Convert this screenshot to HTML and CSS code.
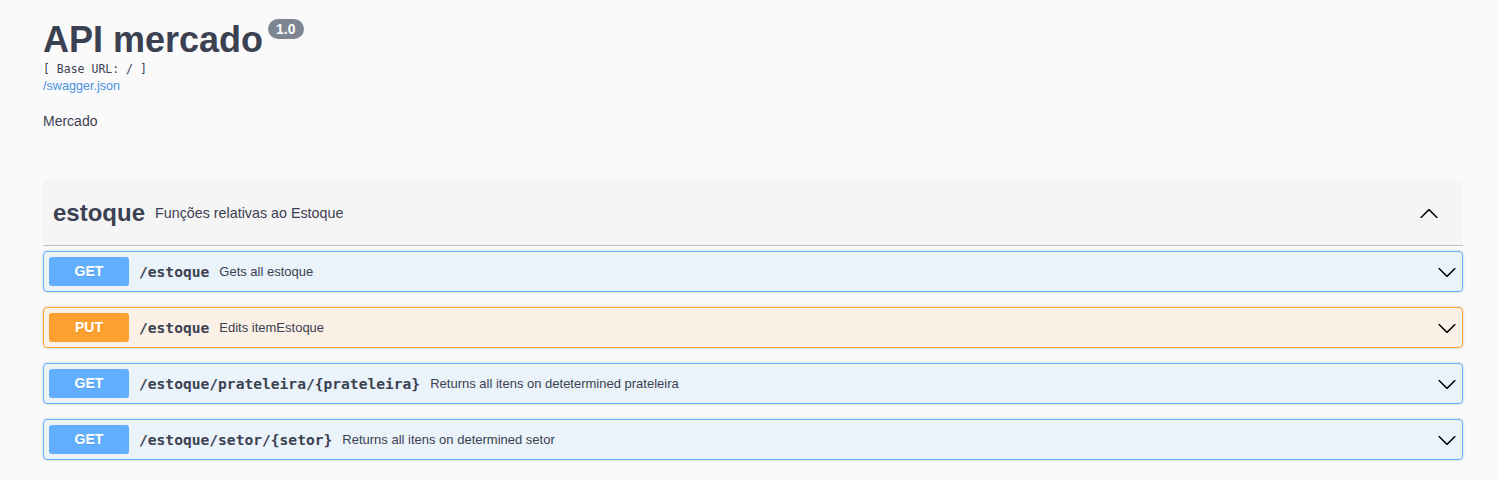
FILE: index.html
```html
<!DOCTYPE html>
<html lang="pt">
<head>
<meta charset="utf-8">
<title>API mercado</title>
<link rel="stylesheet" href="styles.css">
</head>
<body>
<div class="wrapper">
  <div class="info">
    <div class="title-row">
      <h2 class="title">API mercado</h2>
      <span class="version">1.0</span>
    </div>
    <div class="base-url">[ Base URL: / ]</div>
    <a class="spec-link" href="#">/swagger.json</a>
    <p class="description">Mercado</p>
  </div>

  <div class="tag-section">
    <div class="tag-header">
      <span class="tag-name">estoque</span>
      <span class="tag-desc">Funções relativas ao Estoque</span>
      <svg class="arrow arrow-up" width="20" height="20" viewBox="0 0 20 20"><path d="M17.418 14.891c.272.268.709.268.979 0s.271-.701 0-.969l-7.908-7.830c-.27-.268-.707-.268-.979 0l-7.908 7.830c-.27.268-.27.701 0 .969.271.268.709.268.979 0L10 7.75l7.418 7.141z"/></svg>
    </div>

    <div class="opblock get">
      <span class="method">GET</span>
      <span class="path">/estoque</span>
      <span class="op-desc">Gets all estoque</span>
      <svg class="arrow" width="20" height="20" viewBox="0 0 20 20"><path d="M17.418 6.109c.272-.268.709-.268.979 0s.271.701 0 .969l-7.908 7.83c-.27.268-.707.268-.979 0l-7.908-7.83c-.27-.268-.27-.701 0-.969.271-.268.709-.268.979 0L10 13.25l7.418-7.141z"/></svg>
    </div>
    <div class="opblock put">
      <span class="method">PUT</span>
      <span class="path">/estoque</span>
      <span class="op-desc">Edits itemEstoque</span>
      <svg class="arrow" width="20" height="20" viewBox="0 0 20 20"><path d="M17.418 6.109c.272-.268.709-.268.979 0s.271.701 0 .969l-7.908 7.83c-.27.268-.707.268-.979 0l-7.908-7.83c-.27-.268-.27-.701 0-.969.271-.268.709-.268.979 0L10 13.25l7.418-7.141z"/></svg>
    </div>
    <div class="opblock get">
      <span class="method">GET</span>
      <span class="path">/estoque/prateleira/{prateleira}</span>
      <span class="op-desc">Returns all itens on detetermined prateleira</span>
      <svg class="arrow" width="20" height="20" viewBox="0 0 20 20"><path d="M17.418 6.109c.272-.268.709-.268.979 0s.271.701 0 .969l-7.908 7.83c-.27.268-.707.268-.979 0l-7.908-7.83c-.27-.268-.27-.701 0-.969.271-.268.709-.268.979 0L10 13.25l7.418-7.141z"/></svg>
    </div>
    <div class="opblock get">
      <span class="method">GET</span>
      <span class="path">/estoque/setor/{setor}</span>
      <span class="op-desc">Returns all itens on determined setor</span>
      <svg class="arrow" width="20" height="20" viewBox="0 0 20 20"><path d="M17.418 6.109c.272-.268.709-.268.979 0s.271.701 0 .969l-7.908 7.83c-.27.268-.707.268-.979 0l-7.908-7.830c-.27-.268-.27-.701 0-.969.271-.268.709-.268.979 0L10 13.25l7.418-7.141z"/></svg>
    </div>
  </div>
</div>
</body>
</html>
```

FILE: styles.css
```css
html, body {
  margin: 0;
  padding: 0;
  background: #fafafa;
  font-family: "Liberation Sans", Arial, sans-serif;
  color: #3b4151;
}

.wrapper {
  padding: 0 35px 0 43px;
}

.info {
  padding-top: 19px;
}

.title-row {
  display: flex;
  align-items: flex-start;
}

.title {
  margin: 0;
  font-size: 36px;
  line-height: 41px;
  font-weight: 700;
  color: #3b4151;
}

.version {
  margin-left: 5px;
  background: #7d8492;
  color: #fff;
  font-size: 14px;
  font-weight: 700;
  line-height: 20px;
  height: 20px;
  padding: 0 8px;
  border-radius: 57px;
}

.base-url {
  margin-top: 2px;
  font-family: "DejaVu Sans Mono", "Liberation Mono", monospace;
  font-size: 11.5px;
  line-height: 14px;
  color: #3b4151;
}

.spec-link {
  display: block;
  margin-top: 3px;
  font-size: 12.6px;
  line-height: 15px;
  color: #4990e2;
  text-decoration: none;
}

.description {
  margin: 19px 0 0;
  font-size: 14px;
  line-height: 16px;
}

.tag-section {
  margin-top: 51px;
  width: 1420px;
}

.tag-header {
  display: flex;
  align-items: center;
  height: 65px;
  padding: 0 24px 0 10px;
  background: #f5f5f5;
  border-bottom: 1px solid rgba(59, 65, 81, 0.3);
  margin-bottom: 5px;
}

.tag-name {
  font-size: 24px;
  font-weight: 700;
  line-height: 28px;
}

.tag-desc {
  flex: 1;
  font-size: 14.3px;
  padding: 0 10px;
}

.arrow path {
  fill: #000;
}

.opblock {
  display: flex;
  align-items: center;
  padding: 5px;
  margin-bottom: 15px;
  border: 1px solid #61affe;
  border-radius: 4px;
  box-shadow: 0 0 3px rgba(0, 0, 0, 0.19);
  background: rgba(97, 175, 254, 0.1);
}

.opblock.put {
  border-color: #fca130;
  background: rgba(252, 161, 48, 0.1);
}

.method {
  min-width: 80px;
  padding: 6px 0;
  text-align: center;
  font-size: 14px;
  line-height: 17px;
  font-weight: 700;
  color: #fff;
  border-radius: 3px;
  background: #61affe;
  text-shadow: 0 1px 0 rgba(0, 0, 0, 0.1);
}

.put .method {
  background: #fca130;
}

.path {
  padding: 0 10px 0 10px;
  font-family: "DejaVu Sans Mono", "Liberation Mono", monospace;
  font-size: 14.6px;
  font-weight: 700;
  color: #3b4151;
}

.op-desc {
  flex: 1;
  font-size: 13px;
  color: #3b4151;
}
```
